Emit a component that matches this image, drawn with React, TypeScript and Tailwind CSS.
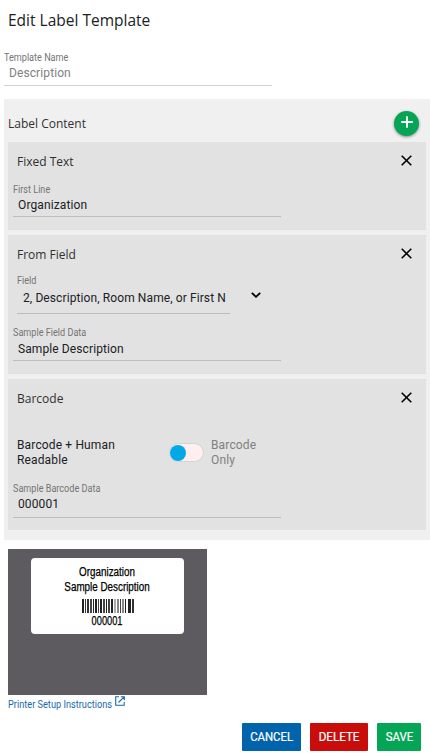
import type { ReactNode } from 'react';

function CloseIcon() {
  return (
    <svg width="11" height="11" viewBox="0 0 11 11" className="block" aria-hidden="true">
      <path d="M0.7 0.7L10.3 10.3M10.3 0.7L0.7 10.3" stroke="#000" strokeWidth="1.6" fill="none" />
    </svg>
  );
}

function Card({ title, className, children }: { title: string; className: string; children: ReactNode }) {
  return (
    <section className={`w-[418px] bg-[#e2e2e2] ${className}`}>
      <header className="flex h-[38px] items-center justify-between pl-[9px] pr-[14px]">
        <h3 className="pt-[2px] font-['Open_Sans',sans-serif] text-[12px] text-[#303030]">{title}</h3>
        <button aria-label="Remove" className="mb-[1px]"><CloseIcon /></button>
      </header>
      {children}
    </section>
  );
}

function Field({ label, value, className }: { label: string; value: ReactNode; className: string }) {
  return (
    <div className={`flex flex-col border-b ${className}`}>
      <span className="h-[13px] origin-left scale-x-[0.91] self-start whitespace-nowrap text-[10px] leading-[13px] text-[#757575]">{label}</span>
      {value}
    </div>
  );
}

const bars = [
  [0, 2, '#222'], [3, 1, '#333'], [5, 2, '#333'], [8, 2, '#444'], [11, 1, '#222'],
  [13, 2, '#222'], [16, 1, '#444'], [18, 2, '#222'], [21, 2, '#444'], [24, 1, '#222'],
  [26, 2, '#444'], [29, 2, '#222'], [32, 2, '#aaa'], [35, 2, '#888'], [38, 1, '#444'],
  [40, 2, '#888'], [43, 1, '#222'], [46, 3, '#222'], [50, 2, '#333'],
] as const;

export default function App() {
  return (
    <main className="flex h-[755px] w-[430px] flex-col overflow-hidden bg-white font-['Roboto',sans-serif] text-[#202124]">
      <h1 className="ml-[8px] mt-[8px] h-[24px] self-start whitespace-nowrap font-['Open_Sans',sans-serif] text-[15.5px] leading-[24px]">Edit Label Template</h1>
      <Field className="ml-[4px] mt-[19px] h-[35px] w-[268px] border-[#d2d2d2]" label="Template Name"
        value={<span className="ml-[5px] self-start text-[12px] leading-[19px] tracking-[0.1px] text-[#808080]">Description</span>} />
      <section className="ml-[4px] mt-[13px] h-[441px] w-[426px] bg-[#f0f0f0] pl-[4px]">
        <header className="flex h-[43px] items-center justify-between pr-[11px] pt-[5px]">
          <h2 className="whitespace-nowrap pt-[2px] font-['Open_Sans',sans-serif] text-[12px] text-[#303030]">Label Content</h2>
          <button aria-label="Add content" className="flex size-[25px] items-center justify-center rounded-full bg-[#05a556] shadow-[0_1px_3px_rgba(0,0,0,0.45)]">
            <svg width="12" height="12" viewBox="0 0 12 12" className="mb-[2px]"><path d="M6 0.2V11.8M0.2 6H11.8" stroke="#fff" strokeWidth="1.8" /></svg>
          </button>
        </header>
        <Card className="h-[88px]" title="Fixed Text">
          <Field className="ml-[5px] mt-[3px] h-[34px] w-[268px] border-[#bdbdbd]" label="First Line"
            value={<span className="ml-[5px] self-start text-[12px] leading-[18px] tracking-[0.12px]">Organization</span>} />
        </Card>
        <Card className="mt-[5px] h-[139px]" title="From Field">
          <div className="flex">
            <Field className="ml-[9px] mt-[1px] h-[40px] w-[213px] border-[#bdbdbd]" label="Field"
              value={<span className="ml-[6px] self-start whitespace-nowrap text-[12px] leading-[23px] tracking-[0.1px]">2, Description, Room Name, or First N</span>} />
            <svg width="10" height="6" viewBox="0 0 10 6" className="ml-[21px] mt-[19px]"><path d="M0.8 0.8L5 4.8L9.2 0.8" stroke="#000" strokeWidth="1.8" fill="none" /></svg>
          </div>
          <Field className="ml-[5px] mt-[12px] h-[35px] w-[268px] border-[#bdbdbd]" label="Sample Field Data"
            value={<span className="ml-[5px] self-start text-[12px] leading-[20px] tracking-[0.1px]">Sample Description</span>} />
        </Card>
        <Card className="mt-[5px] h-[151px]" title="Barcode">
          <div className="mt-[20px] flex h-[31px] items-center text-[12px] leading-[15px] tracking-[0.14px]">
            <span className="ml-[9px] w-[152px] pt-[1px]">Barcode + Human<br />Readable</span>
            <span className="flex h-[19px] w-[35px] items-center rounded-full border border-[#d7d2d2] bg-[#ffefef]"><i className="size-[16px] rounded-full bg-[#03a9e7]" /></span>
            <span className="ml-[7px] pt-[1px] text-[#808080]">Barcode<br />Only</span>
          </div>
          <Field className="ml-[5px] mt-[14px] h-[36px] w-[268px] border-[#bdbdbd]" label="Sample Barcode Data"
            value={<span className="ml-[5px] self-start text-[12px] leading-[18px] tracking-[0.12px]">000001</span>} />
        </Card>
      </section>
      <section className="ml-[8px] mt-[9px] h-[146px] w-[199px] shrink-0 bg-[#5d5b60] pt-[9px]">
        <div className="ml-[23px] flex h-[76px] w-[153px] flex-col items-center rounded-[4px] bg-white pt-[7px] font-['Liberation_Sans',sans-serif] text-[12px] leading-[15px] text-black [-webkit-text-stroke:0.25px_#000]">
          <span className="inline-block scale-x-[0.82] whitespace-nowrap">Organization</span>
          <span className="inline-block scale-x-[0.82] whitespace-nowrap">Sample Description</span>
          <svg width="52" height="14" className="mt-[4px] block" shapeRendering="crispEdges">
            {bars.map(([x, w, fill]) => <rect key={x} x={x} y="0" width={w} height="14" fill={fill} />)}
          </svg>
          <span className="mt-[1px] inline-block scale-x-[0.77]">000001</span>
        </div>
      </section>
      <a className="ml-[8px] mt-[1px] flex h-[15px] items-center text-[10px] text-[#176aae]">
        <span className="w-[107px] origin-left scale-x-[0.92] whitespace-nowrap pt-[2px]">Printer Setup Instructions</span>
        <svg width="10" height="10" viewBox="0 0 10 10" className="mb-[5px] shrink-0" fill="none" stroke="#176aae" strokeWidth="1.1"><path d="M4 0.8H0.7V9.3H9.2V6M5.8 0.7H9.3V4.2M9.1 0.9L3.5 6.5" /></svg>
      </a>
      <footer className="ml-[242px] mt-[12px] flex h-[28px] text-[12px] text-white [-webkit-text-stroke:0.2px_#fff]">
        <button className="h-[28px] w-[59px] rounded-[1px] bg-[#0063ab] pb-[1px]"><span className="inline-block scale-x-[0.95]">CANCEL</span></button>
        <button className="ml-[9px] h-[28px] w-[58px] rounded-[1px] bg-[#c90d0b] pb-[1px]"><span className="inline-block scale-x-[0.97]">DELETE</span></button>
        <button className="ml-[9px] h-[28px] w-[44px] rounded-[1px] bg-[#05a556] pb-[1px]"><span className="inline-block scale-x-[0.95]">SAVE</span></button>
      </footer>
    </main>
  );
}
